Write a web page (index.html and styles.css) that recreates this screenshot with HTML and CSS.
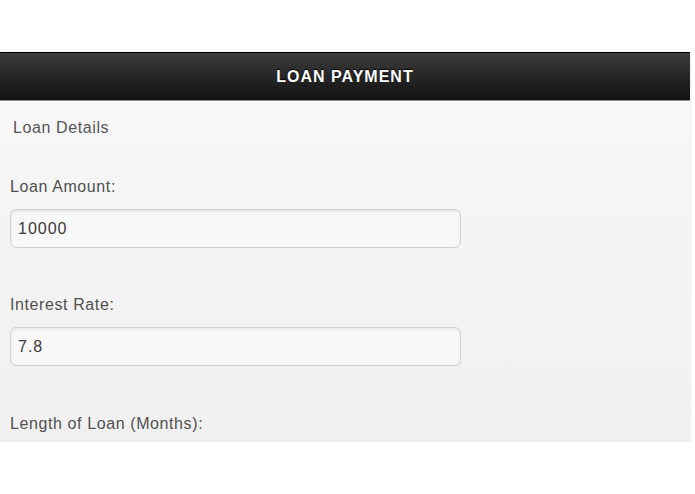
FILE: index.html
```html
<!DOCTYPE html>
<html lang="en">
<head>
<meta charset="utf-8">
<title>Loan Payment</title>
<link rel="stylesheet" href="styles.css">
</head>
<body>
<div class="page">
  <header class="bar">
    <h1 class="bar-title">LOAN PAYMENT</h1>
  </header>
  <main class="content">
    <p class="section-title">Loan Details</p>
    <div class="field">
      <label class="field-label" for="amount">Loan Amount:</label>
      <input class="field-input" id="amount" type="text" value="10000">
    </div>
    <div class="field">
      <label class="field-label" for="rate">Interest Rate:</label>
      <input class="field-input" id="rate" type="text" value="7.8">
    </div>
    <div class="field field-slider">
      <label class="field-label" for="months">Length of Loan (Months):</label>
    </div>
  </main>
</div>
</body>
</html>
```
FILE: styles.css
```css
html, body {
  margin: 0;
  padding: 0;
  background: #ffffff;
}

body {
  padding-top: 52px;
  font-family: "Liberation Sans", Arial, Helvetica, sans-serif;
  font-size: 16px;
  color: #505050;
}

.page {
  width: 690px;
  box-shadow: 1px 0 2px rgba(0, 0, 0, 0.08);
}

/* dark top toolbar */
.bar {
  height: 47px;
  border-top: 1px solid #000000;
  border-bottom: 1px solid #8e8e8e;
  background: linear-gradient(#3c3c3c, #111111);
  display: flex;
  align-items: center;
  justify-content: center;
}

.bar-title {
  margin: 0;
  font-size: 16px;
  font-weight: bold;
  letter-spacing: 1px;
  color: #ffffff;
  text-shadow: 0 -1px 1px #000000;
}

/* light form body */
.content {
  height: 341px;
  overflow: hidden;
  box-sizing: border-box;
  padding: 17px 0 0 10px;
  background: linear-gradient(#f7f7f7, #f0f0f0);
}

.section-title {
  margin: 0 0 0 3px;
  line-height: 20px;
  letter-spacing: 0.6px;
  color: #555555;
}

.field {
  margin-top: 39px;
  display: flex;
  flex-direction: column;
  align-items: flex-start;
}

.field + .field {
  margin-top: 47px;
}

.field-slider {
  margin-top: 48px !important;
}

.field-label {
  line-height: 20px;
  letter-spacing: 0.6px;
  color: #505050;
  margin-bottom: 12px;
}

.field-input {
  width: 451px;
  height: 39px;
  box-sizing: border-box;
  margin: 0;
  padding: 0 7px;
  border: 1px solid #d2d2d2;
  border-radius: 6px;
  background: #f8f8f8;
  box-shadow: inset 0 1px 3px rgba(0, 0, 0, 0.1);
  font-family: "Liberation Sans", Arial, Helvetica, sans-serif;
  font-size: 16px;
  letter-spacing: 1px;
  color: #3a3a3a;
  outline: none;
}
```
